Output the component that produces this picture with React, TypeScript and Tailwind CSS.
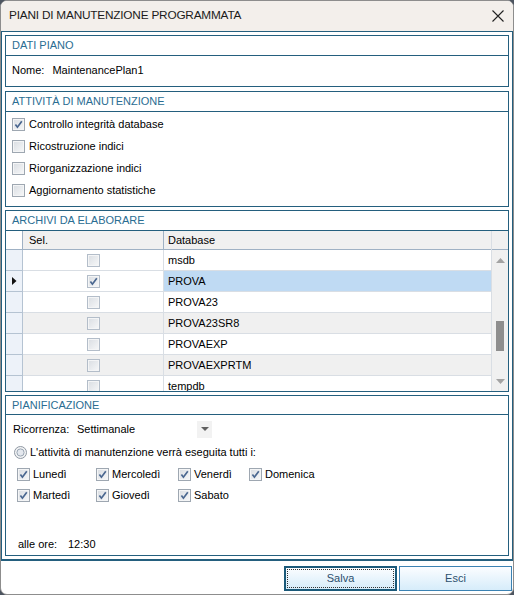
import React from "react";

type Row = { name: string; sel: boolean; current?: boolean };

const rows: Row[] = [
  { name: "msdb", sel: false },
  { name: "PROVA", sel: true, current: true },
  { name: "PROVA23", sel: false },
  { name: "PROVA23SR8", sel: false },
  { name: "PROVAEXP", sel: false },
  { name: "PROVAEXPRTM", sel: false },
  { name: "tempdb", sel: false },
];

function Check({ checked, light }: { checked?: boolean; light?: boolean }) {
  return (
    <span
      className={`inline-flex h-[13px] w-[13px] shrink-0 items-center justify-center border ${
        light ? "border-[#b3bdc9]" : "border-[#9ea7b1]"
      } bg-linear-to-br from-[#d9dde2] to-[#f7f8f9]`}
    >
      <span className="flex h-[11px] w-[11px] items-center justify-center border border-[#f4f5f6]">
        {checked ? (
          <svg width="9" height="9" viewBox="0 0 9 9">
            <path d="M1.4 4.6 L3.4 7.2 L7.8 1.2" fill="none" stroke="#4a6790" strokeWidth="1.7" />
          </svg>
        ) : null}
      </span>
    </span>
  );
}

function Group({
  title,
  headH,
  className,
  children,
}: {
  title: string;
  headH: string;
  className: string;
  children: React.ReactNode;
}) {
  return (
    <div className={`flex flex-col border border-[#245f7e] bg-white ${className}`}>
      <div className={`flex ${headH} shrink-0 items-center border-b border-[#245f7e] pl-[6px] text-[11px] text-[#2a6d92]`}>
        {title}
      </div>
      {children}
    </div>
  );
}

export default function App() {
  return (
    <div className="h-[595px] w-[514px] bg-[#4d5560] font-['Liberation_Sans',Arial,sans-serif] text-[11px] text-black">
      <div className="flex h-full flex-col overflow-hidden rounded-[7px] border border-[#8d8d8d] bg-white">
        {/* title bar */}
        <div className="flex h-[30px] shrink-0 items-center justify-between bg-[#f3efeb] pl-[8px] pr-[9px]">
          <span className="text-[11.8px] tracking-[-0.2px] text-[#1b1b1b]">PIANI DI MANUTENZIONE PROGRAMMATA</span>
          <svg width="12" height="12" viewBox="0 0 12 12">
            <path d="M0.5 0.5 L11.5 11.5 M11.5 0.5 L0.5 11.5" stroke="#222" strokeWidth="1.1" />
          </svg>
        </div>

        {/* form frame */}
        <div className="flex h-[530px] shrink-0 flex-col gap-[3px] border-x border-t border-b-2 border-[#245f7e] p-[3px]">
          <Group title="DATI PIANO" headH="h-[20px]" className="h-[52px] shrink-0">
            <div className="flex flex-1 items-center pl-[6px] pb-[2px]">
              <span>Nome:</span>
              <span className="ml-[8px]">MaintenancePlan1</span>
            </div>
          </Group>

          <Group title="ATTIVITÀ DI MANUTENZIONE" headH="h-[20px]" className="mt-px h-[116px] shrink-0">
            <div className="flex flex-col pl-[6px] pt-[1px]">
              {[
                ["Controllo integrità database", true],
                ["Ricostruzione indici", false],
                ["Riorganizzazione indici", false],
                ["Aggiornamento statistiche", false],
              ].map(([label, c]) => (
                <div key={label as string} className="flex h-[22px] items-center gap-[4px]">
                  <Check checked={c as boolean} />
                  <span>{label as string}</span>
                </div>
              ))}
            </div>
          </Group>

          <Group title="ARCHIVI DA ELABORARE" headH="h-[20px]" className="h-[182px] shrink-0">
            <div className="flex flex-1 overflow-hidden">
              <div className="flex flex-1 flex-col overflow-hidden">
                {/* header */}
                <div className="flex h-[19px] shrink-0 border-b border-[#9fb1c4] bg-[#f0f0f0]">
                  <div className="w-[17px] shrink-0 border-r border-[#9fb1c4] bg-white" />
                  <div className="flex w-[141px] shrink-0 items-center border-r border-[#9fb1c4] pl-[6px]">Sel.</div>
                  <div className="flex flex-1 items-center pl-[4px]">Database</div>
                </div>
                {rows.map((r, i) => {
                  const alt = i % 2 === 1 && !r.current;
                  return (
                    <div key={r.name} className="flex h-[21px] shrink-0">
                      <div className="flex w-[17px] shrink-0 items-center justify-center border-r border-b border-[#b5c3d2] bg-[#edf2f9]">
                        {r.current ? (
                          <svg width="5" height="8" viewBox="0 0 5 8">
                            <path d="M0 0 L4.5 4 L0 8 Z" fill="#111" />
                          </svg>
                        ) : null}
                      </div>
                      <div
                        className={`flex w-[141px] shrink-0 items-center justify-center border-r border-b border-[#d9dee4] ${
                          alt ? "bg-[#f0f0f0]" : "bg-white"
                        }`}
                      >
                        <Check checked={r.sel} light />
                      </div>
                      <div
                        className={`flex flex-1 items-center border-b border-[#d9dee4] pl-[4px] ${
                          r.current ? "bg-[#bfdaf3]" : alt ? "bg-[#f0f0f0]" : "bg-white"
                        }`}
                      >
                        {r.name}
                      </div>
                    </div>
                  );
                })}
              </div>
              {/* scrollbar */}
              <div className="flex w-[17px] shrink-0 flex-col border-l border-[#d9dee4] bg-[#f0f0f0]">
                <div className="h-[19px] shrink-0 border-b border-[#9fb1c4]" />
                <div className="flex h-[20px] shrink-0 items-center justify-center">
                  <svg width="9" height="5" viewBox="0 0 9 5">
                    <path d="M0 5 L4.5 0 L9 5 Z" fill="#a3a3a3" />
                  </svg>
                </div>
                <div className="flex-1 px-[4px] pt-[51px]">
                  <div className="h-[30px] w-[8px] bg-[#8e8e8e]" />
                </div>
                <div className="flex h-[20px] shrink-0 items-center justify-center">
                  <svg width="9" height="5" viewBox="0 0 9 5">
                    <path d="M0 0 L4.5 5 L9 0 Z" fill="#a3a3a3" />
                  </svg>
                </div>
              </div>
            </div>
          </Group>

          <Group title="PIANIFICAZIONE" headH="h-[19px]" className="flex-1">
            <div className="flex flex-col pl-[7px] pt-[4px]">
              <div className="flex h-[20px] items-center">
                <span className="w-[64px]">Ricorrenza:</span>
                <span className="w-[120px]">Settimanale</span>
                <span className="flex h-[17px] w-[15px] items-center justify-center bg-[#f2f2f2]">
                  <svg width="8" height="4" viewBox="0 0 8 4">
                    <path d="M0 0 L4 4 L8 0 Z" fill="#606060" />
                  </svg>
                </span>
              </div>
              <div className="mt-[3px] flex h-[20px] items-center gap-[3px] pl-px">
                <svg width="13" height="13" viewBox="0 0 13 13">
                  <circle cx="6.5" cy="6.5" r="6" fill="#f2f3f4" stroke="#8f98a3" />
                  <circle cx="6.5" cy="6.5" r="3.6" fill="#e4e8ee" stroke="#9aa6b4" strokeWidth="1" />
                </svg>
                <span>L'attività di manutenzione verrà eseguita tutti i:</span>
              </div>
              <div className="mt-[2px] flex flex-col pl-[4px]">
                {[
                  ["Lunedì", "Mercoledì", "Venerdì", "Domenica"],
                  ["Martedì", "Giovedì", "Sabato"],
                ].map((line, li) => (
                  <div key={li} className="flex h-[21px] items-center">
                    {line.map((d, di) => (
                      <div
                        key={d}
                        className={`flex items-center gap-[3px] ${
                          di === 0 ? "w-[79px]" : di === 1 ? "w-[82px]" : di === 2 ? "w-[71px]" : ""
                        }`}
                      >
                        <Check checked />
                        <span>{d}</span>
                      </div>
                    ))}
                  </div>
                ))}
              </div>
              <div className="mt-[28px] flex h-[20px] items-center pl-[5px]">
                <span className="w-[50px]">alle ore:</span>
                <span>12:30</span>
              </div>
            </div>
          </Group>
        </div>

        {/* footer */}
        <div className="flex flex-1 items-start justify-end gap-[2px] pr-px pt-[5px]">
          <button className="relative h-[25px] w-[113px] border-2 border-[#1a5979] bg-linear-to-b from-[#fbfdff] to-[#d6ecfa] text-[11px] text-[#2b4f6d]">
            <span className="absolute inset-[1px] border border-dotted border-[#333]" />
            Salva
          </button>
          <button className="h-[25px] w-[113px] border border-[#3b82b3] bg-linear-to-b from-[#fbfdff] to-[#d6ecfa] text-[11px] text-[#2b4f6d]">
            Esci
          </button>
        </div>
      </div>
    </div>
  );
}
